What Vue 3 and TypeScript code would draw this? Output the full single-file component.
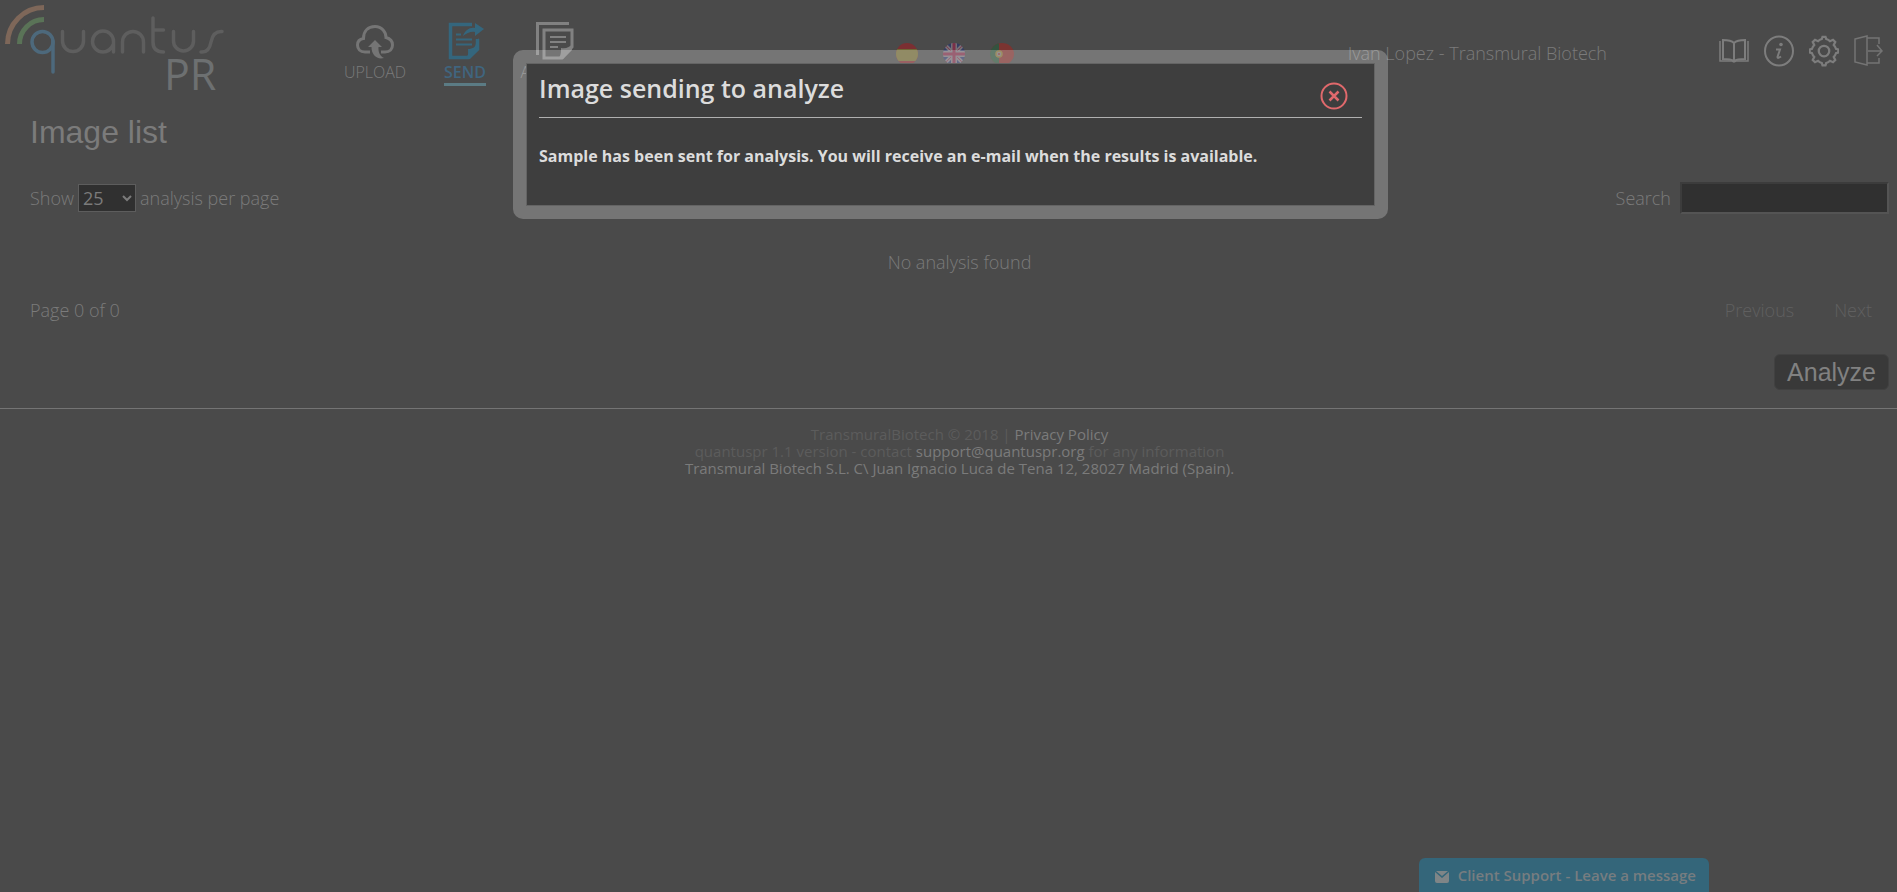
<script setup lang="ts">
import { ref } from 'vue'

const pageSize = ref('25')
const search = ref('')
const dialogOpen = ref(true)
const sizes = ['10', '25', '50', '100']
const gearTeeth = 'M17 4 L18 1 H22 L23 4 Q26 5 28 7 L32 5 L35 8 L33 12 Q35 14 36 17 L39 18 V22 L36 23 Q35 26 33 28 L35 32 L32 35 L28 33 Q26 35 23 36 L22 39 H18 L17 36 Q14 35 12 33 L8 35 L5 32 L7 28 Q5 26 4 23 L1 22 V18 L4 17 Q5 14 7 12 L5 8 L8 5 L12 7 Q14 5 17 4 Z'
</script>

<template>
  <div class="page">
    <header class="header">
      <a class="logo" href="#" aria-label="quantus PR">
        <svg class="mark" width="226" height="76" viewBox="0 0 226 76" fill="none" stroke-linecap="round">
          <g stroke-linecap="butt" stroke-width="5">
            <path d="M7.500 44 A36.500 36.500 0 0 1 44 7.500" stroke="#7e6759" />
            <path d="M19.500 44 A24.500 24.500 0 0 1 44 19.500" stroke="#5a7357" />
          </g>
          <g stroke="#4d697c" stroke-width="3.500">
            <ellipse cx="42.500" cy="42" rx="10.500" ry="10.500" />
            <path d="M53 41 V72" />
          </g>
          <g stroke="#5e5e5e" stroke-width="3.500">
            <path d="M62.500 31.500 V41 A10.500 10.500 0 0 0 83.500 41 V31.500" />
            <path d="M113.500 52 V41 A10.500 10.500 0 1 0 103 52 Q110 52 113.500 44" />
            <path d="M122.500 52 V42 A10.500 10.500 0 0 1 143.500 42 V52" />
            <path d="M153 18 V42 Q153 52 163.500 52 M153 30 H163.500" />
            <path d="M173.500 31.500 V41 A10 10 0 0 0 193.500 41 V31.500" />
            <path d="M201 52 Q209 53 211 42 Q213 31 222 31.500" />
          </g>
        </svg>
        <span class="pr">PR</span>
      </a>

      <nav class="nav">
        <a href="#upload">
          <svg width="38" height="38" viewBox="0 0 38 38" fill="none">
            <path d="M14 30 H9 C4 30 1.500 27 1.500 23 C1.500 19 4.500 17 7.500 16.500 C7.500 9 12 4.500 19 4.500 C26 4.500 30 10 30 15.500 C34 16.500 36.500 19 36.500 23 C36.500 27 34 30 29 30 H25" stroke="#757575" stroke-width="3" />
            <path d="M19 18 L26 25 H22.500 C22 30 24 34 28 36 C21 38 15.500 33 15.500 25 H12 Z" fill="#757575" />
          </svg>
          <span>UPLOAD</span>
        </a>
        <a href="#send" class="active">
          <svg width="38" height="38" viewBox="0 0 38 38" fill="none">
            <path d="M26 2.500 H4.500 V35.500 H22 L31.500 27 V17" stroke="#34667d" stroke-width="3.500" />
            <path d="M19 37 C23 34 22 31 22 27 C27 27 30 25 30 20 L33 16 V28 L24 37 Z M17 14 C19 8 24 5 29 6 V1 L38 7 L29 14 V10 C25 9 21 11 17 14 Z" fill="#34667d" />
            <path d="M10 12.500 H15 M10 17.500 H26 M10 22.500 H26" stroke="#34667d" stroke-width="2" />
          </svg>
          <span>SEND</span>
        </a>
        <a href="#analysis">
          <svg width="38" height="38" viewBox="0 0 38 38" fill="none">
            <path d="M1.500 33 V1.500 H33" stroke="#818181" stroke-width="3" />
            <path d="M8 36 V8 H36 V25 L26 36 Z" stroke="#818181" stroke-width="3" />
            <path d="M22 37 C25 34 25 30 25 26 C30 27 34 25 36 22 V28 L27 37 Z" fill="#818181" />
            <path d="M14 15 H30 M14 20 H30 M14 25 H22" stroke="#818181" stroke-width="2" />
          </svg>
          <span>ANALYSIS</span>
        </a>
      </nav>

      <div class="flags">
        <button type="button" aria-label="Español">
          <svg width="22" height="22" viewBox="0 0 22 22">
            <clipPath id="round-es"><circle cx="11" cy="11" r="11" /></clipPath>
            <g clip-path="url(#round-es)"><path fill="#7b2f32" d="M0 0H22V22H0Z" /><path fill="#6f6735" d="M0 6H22V18H0Z" /></g>
          </svg>
        </button>
        <button type="button" aria-label="English">
          <svg width="22" height="22" viewBox="0 0 22 22">
            <clipPath id="round-en"><circle cx="11" cy="11" r="11" /></clipPath>
            <g clip-path="url(#round-en)">
              <path fill="#333c64" d="M0 0H22V22H0Z" />
              <path stroke="#756f75" stroke-width="4" d="M1 1L21 21M21 1L1 21" />
              <path stroke="#7f3d50" stroke-width="1" d="M1 1L21 21M21 1L1 21" />
              <path stroke="#756f75" stroke-width="6" d="M11 0V22M0 11H22" />
              <path stroke="#7b3048" stroke-width="3" d="M11 0V22M0 11H22" />
            </g>
          </svg>
        </button>
        <button type="button" aria-label="Português">
          <svg width="24" height="22" viewBox="0 0 24 22">
            <clipPath id="round-pt"><ellipse cx="12" cy="11" rx="12" ry="11" /></clipPath>
            <g clip-path="url(#round-pt)"><path fill="#7b3431" d="M0 0H24V22H0Z" /><path fill="#34533f" d="M0 0H9V22H0Z" /></g>
            <circle cx="9" cy="11" r="3" fill="#757070" stroke="#7e6b35" stroke-width="1.500" /><circle cx="9" cy="11" r="1" fill="#7b3431" />
          </svg>
        </button>
      </div>

      <span class="user">Ivan Lopez - Transmural Biotech</span>

      <div class="tools">
        <a href="#manual" aria-label="Manual">
          <svg width="30" height="32" viewBox="0 0 30 32" fill="none" stroke="#7d7d7d">
            <path d="M15 8 C12 5 8 5 4 5 V24 C8 24 12 24 15 26 C18 24 22 24 26 24 V5 C22 5 18 5 15 8 Z M15 8 V25" stroke-width="2" />
            <path d="M1 6 V26 H13 L15 27 L17 26 H29 V6" stroke-width="1.500" />
          </svg>
        </a>
        <a href="#about" aria-label="Information">
          <svg width="30" height="32" viewBox="0 0 30 32" fill="none" stroke="#7d7d7d">
            <ellipse cx="15" cy="16" rx="14" ry="14.500" stroke-width="2" />
            <path d="M12 14.500 H16 L13.500 22 Q13.500 24 17 21.500" stroke-width="2" /><circle cx="17" cy="9.500" r="1.800" fill="#7d7d7d" stroke="none" />
          </svg>
        </a>
        <a href="#settings" aria-label="Settings">
          <svg width="30" height="32" viewBox="0 0 40 40" fill="none" stroke="#7d7d7d" stroke-width="3">
            <path :d="gearTeeth" /><circle cx="20" cy="20" r="7" />
          </svg>
        </a>
        <a href="#logout" aria-label="Log out">
          <svg width="30" height="32" viewBox="0 0 30 32" fill="none" stroke="#747474" stroke-width="1.500">
            <path d="M1 4 L13 1 V30 L1 27 Z M13 3 H25 V9 M25 23 V28 H13 M14 16 H28 M23 10 L28 16 L23 21" />
          </svg>
        </a>
      </div>
    </header>

    <main class="main">
      <h1>Image list</h1>
      <div class="row filters">
        <div class="size">
          <label for="size">Show</label>
          <select id="size" v-model="pageSize">
            <option v-for="n in sizes" :key="n" :value="n">{{ n }}</option>
          </select>
          <label for="size">analysis per page</label>
        </div>
        <div class="search">
          <label for="search">Search</label>
          <input id="search" v-model="search" type="text" />
        </div>
      </div>
      <p class="empty">No analysis found</p>
      <div class="row pager">
        <span>Page 0 of 0</span>
        <div class="steps">
          <button type="button">Previous</button>
          <button type="button">Next</button>
        </div>
      </div>
      <div class="actions"><button type="button" class="analyze">Analyze</button></div>
    </main>

    <footer class="footer">
      <p>TransmuralBiotech © 2018 | <a href="#privacy">Privacy Policy</a></p>
      <p>quantuspr 1.1 version - contact <a href="mailto:support@quantuspr.org">support@quantuspr.org</a> for any information</p>
      <p class="address">Transmural Biotech S.L. C\ Juan Ignacio Luca de Tena 12, 28027 Madrid (Spain).</p>
    </footer>

    <button type="button" class="chat">
      <svg width="14" height="12" viewBox="0 0 14 12"><path fill="#7f8587" d="M1 0 H13 L7 5 Z M0 1 L7 7 L14 1 V10 Q14 12 12 12 H2 Q0 12 0 10 Z" /></svg>
      Client Support - Leave a message
    </button>

    <section v-if="dialogOpen" class="dialog" role="dialog" aria-labelledby="dialog-title">
      <div class="panel">
        <div class="panel-head">
          <h2 id="dialog-title">Image sending to analyze</h2>
          <button type="button" class="close" aria-label="Close" @click="dialogOpen = false">
            <svg width="28" height="28" viewBox="0 0 28 28" fill="none" stroke="#e0696c" stroke-width="2">
              <circle cx="14" cy="14" r="12.500" /><path d="M9.500 9.500 L18.500 18.500 M18.500 9.500 L9.500 18.500" stroke-width="2.500" />
            </svg>
          </button>
        </div>
        <p>Sample has been sent for analysis. You will receive an e-mail when the results is available.</p>
      </div>
    </section>
  </div>
</template>

<style>
body {
  margin: 0;
  background: #4a4a4a;
}
</style>

<style scoped>
* {
  box-sizing: border-box;
}
.page {
  min-height: 100vh;
  color: #7b7b7b;
  font-family: "Open Sans", "Noto Sans", sans-serif;
  font-size: 18px;
  font-weight: 300;
  line-height: 24px;
}
a {
  color: inherit;
  text-decoration: none;
}
button {
  padding: 0;
  border: 0;
  background: none;
  color: inherit;
  font: inherit;
}
svg {
  display: block;
}
p, h1, h2 {
  margin: 0;
}
.header {
  display: flex;
  height: 112px;
}
.logo {
  position: relative;
  width: 330px;
}
.pr {
  position: absolute;
  left: 164px;
  top: 44px;
  font-size: 43px;
  line-height: 60px;
  font-weight: 400;
  color: #6d7071;
}
.nav {
  display: flex;
  padding-top: 22px;
}
.nav a {
  display: flex;
  flex-direction: column;
  align-items: center;
  width: 90px;
  font-size: 16px;
}
.nav a > svg {
  margin-bottom: 1px;
}
.nav span {
  line-height: 22px;
}
.nav .active span {
  border-bottom: 3px solid #5b7b84;
  color: #40657f;
  font-weight: 600;
}
.flags {
  display: flex;
  gap: 25px;
  align-items: flex-start;
  margin-left: 296px;
  padding-top: 43px;
}
.user {
  margin-left: auto;
  padding-top: 41px;
}
.tools {
  display: flex;
  gap: 15px;
  margin-left: 112px;
  padding: 35px 13px 0 0;
}
.main {
  padding: 0 8px 0 30px;
}
h1 {
  color: #7b7b7b;
  font-family: "Liberation Sans", Arial, sans-serif;
  font-size: 32px;
  font-weight: 400;
  line-height: 40px;
}
.row {
  display: flex;
  justify-content: space-between;
  align-items: center;
}
.filters {
  height: 32px;
  margin-top: 30px;
}
.size {
  display: flex;
  align-items: center;
  gap: 4px;
}
select {
  width: 58px;
  height: 28px;
  border: 1px solid #5d5d5d;
  background: #303030;
  color: #7b7b7b;
  font: inherit;
  font-weight: 400;
}
.search {
  display: flex;
  align-items: center;
  gap: 9px;
}
input {
  width: 209px;
  height: 32px;
  border: 2px solid;
  border-color: #3c3c3c #545454 #545454 #3c3c3c;
  background: #303030;
  color: #7b7b7b;
  font: inherit;
}
.empty {
  margin-top: 36px;
  text-align: center;
}
.pager {
  margin-top: 24px;
}
.steps {
  display: flex;
  gap: 40px;
  padding-right: 17px;
  color: #606060;
}
.actions {
  display: flex;
  justify-content: flex-end;
  margin-top: 32px;
}
.analyze {
  height: 36px;
  padding: 0 12px;
  border: 1px solid #414141;
  border-radius: 6px;
  background: #393939;
  color: #818181;
  font-family: "Liberation Sans", Arial, sans-serif;
  font-size: 25px;
  font-weight: 400;
}
.footer {
  margin-top: 18px;
  padding: 17px 8px 0 30px;
  border-top: 1px solid #747474;
  color: #5c5c5c;
  font-size: 15px;
  font-weight: 400;
  line-height: 17px;
  text-align: center;
}
.footer a, .address {
  color: #7b7b7b;
}
.chat {
  position: fixed;
  right: 188px;
  bottom: 0;
  display: flex;
  align-items: center;
  gap: 9px;
  height: 34px;
  padding: 0 13px 0 16px;
  border-radius: 6px 6px 0 0;
  background: #34667a;
  color: #777d80;
  font-size: 15px;
  font-weight: 600;
}
.chat svg {
  margin-top: 4px;
}
.dialog {
  position: fixed;
  top: 50px;
  left: 513px;
  right: 509px;
  padding: 13px;
  border-radius: 10px;
  background: linear-gradient(#3e3e3e, #3e3e3e) content-box, rgba(255, 255, 255, 0.24);
}
.panel {
  height: 143px;
  padding: 0 12px;
  border: 1px solid #646464;
  background: #3e3e3e;
  color: #dcdcdc;
  font-size: 16px;
  font-weight: 700;
}
.panel-head {
  display: flex;
  justify-content: space-between;
  height: 54px;
  margin-bottom: 26px;
  border-bottom: 1px solid #b0b0b0;
}
h2 {
  padding-top: 6px;
  font-size: 25px;
  font-weight: 600;
  line-height: 36px;
}
.close {
  align-self: flex-start;
  margin: 18px 14px 0 0;
}
</style>
